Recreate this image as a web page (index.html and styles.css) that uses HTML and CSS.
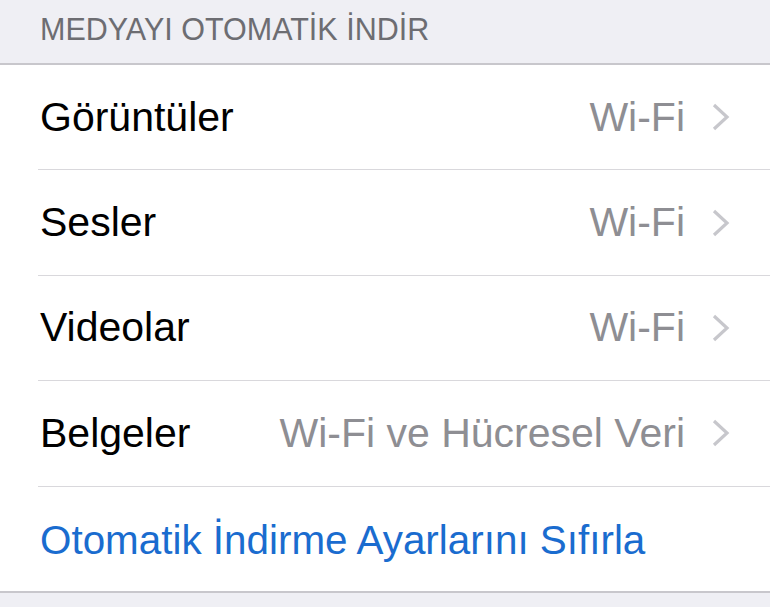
FILE: index.html
```html
<!DOCTYPE html>
<html lang="tr">
<head>
<meta charset="utf-8">
<link rel="stylesheet" href="styles.css">
</head>
<body>
<div class="page">
  <div class="section-header">MEDYAYI OTOMATİK İNDİR</div>
  <div class="group">
    <div class="row"><div class="row-inner"><span class="label">Görüntüler</span><span class="value">Wi-Fi</span><svg class="chev" viewBox="0 0 18 28"><path d="M2 2 L15 14 L2 26"/></svg></div></div>
    <div class="row"><div class="row-inner"><span class="label">Sesler</span><span class="value">Wi-Fi</span><svg class="chev" viewBox="0 0 18 28"><path d="M2 2 L15 14 L2 26"/></svg></div></div>
    <div class="row"><div class="row-inner"><span class="label">Videolar</span><span class="value">Wi-Fi</span><svg class="chev" viewBox="0 0 18 28"><path d="M2 2 L15 14 L2 26"/></svg></div></div>
    <div class="row"><div class="row-inner"><span class="label">Belgeler</span><span class="value">Wi-Fi ve Hücresel Veri</span><svg class="chev" viewBox="0 0 18 28"><path d="M2 2 L15 14 L2 26"/></svg></div></div>
    <div class="row last"><div class="row-inner"><span class="link">Otomatik İndirme Ayarlarını Sıfırla</span></div></div>
  </div>
</div>
</body>
</html>
```
FILE: styles.css
```css
html, body {
  margin: 0;
  padding: 0;
  background: #efeff4;
}
.page {
  width: 770px;
  height: 607px;
  overflow: hidden;
  background: #efeff4;
  font-family: "Liberation Sans", Arial, sans-serif;
}
.section-header {
  height: 65px;
  box-sizing: border-box;
  padding: 14px 0 0 40px;
  font-size: 30.5px;
  line-height: 30px;
  color: #6d6d72;
  border-bottom: 2px solid #c8c7cc;
}
.group {
  background: #fff;
  border-bottom: 2px solid #c8c7cc;
}
.row {
  padding-left: 38px;
}
.row-inner {
  height: 104.4px;
  border-bottom: 1.5px solid #d9d8dc;
  display: flex;
  align-items: center;
  padding-left: 2px;
  padding-right: 40px;
}
.row.last .row-inner {
  border-bottom: none;
  height: 104px;
  padding-top: 3px;
  box-sizing: border-box;
}
.label {
  font-size: 41px;
  color: #000;
  flex: 1;
}
.value {
  font-size: 41px;
  color: #8e8e93;
}
.chev {
  width: 18px;
  height: 28px;
  margin-left: 27px;
  fill: none;
  stroke: #c7c7cc;
  stroke-width: 3.2;
}
.link {
  font-size: 40.4px;
  color: #1a6ccf;
}
```
